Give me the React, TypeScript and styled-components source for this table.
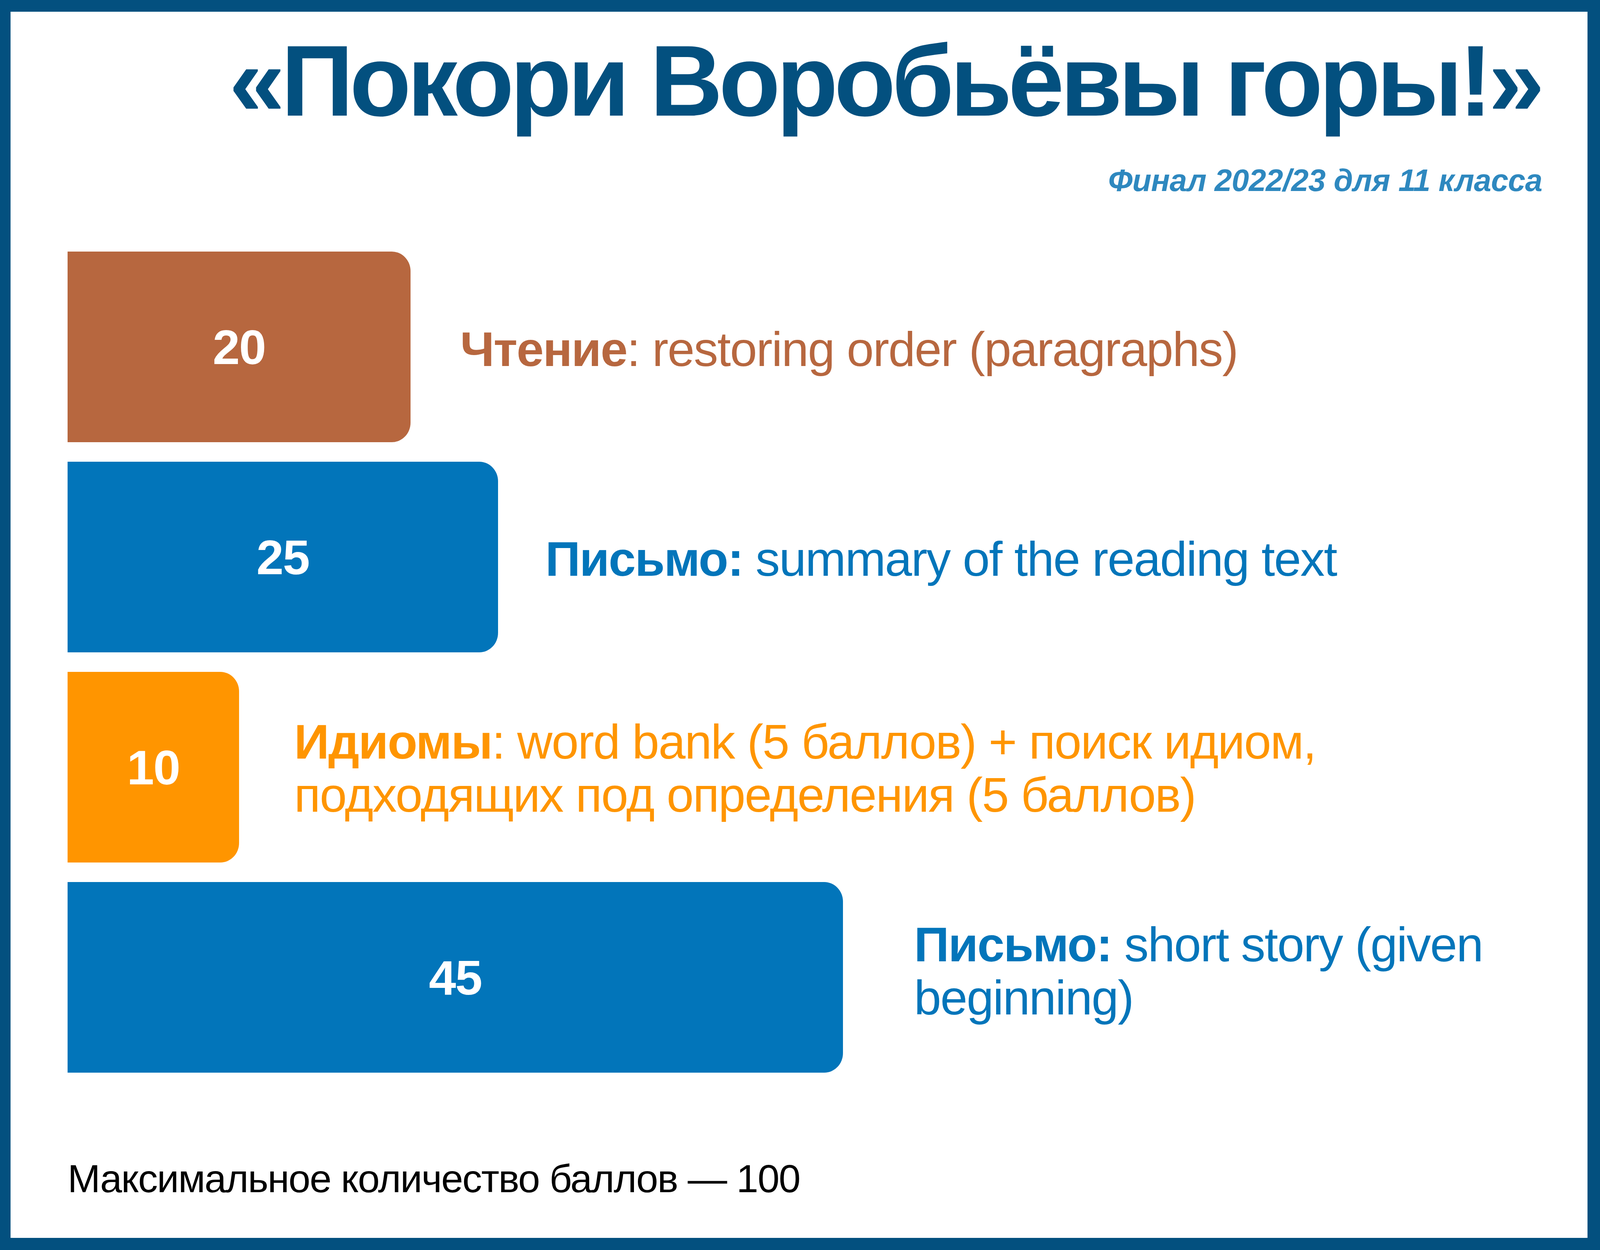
import React from 'react';
import styled, { createGlobalStyle } from 'styled-components';

type Segment = {
  value: number;
  width: number;
  color: string;
  offset: number;
  padTop: number;
  padBottom: number;
  title: string;
  boldColon: boolean;
  lines: string[];
};

const segments: Segment[] = [
  {
    value: 20,
    width: 878,
    color: '#b7673f',
    offset: 127,
    padTop: 12,
    padBottom: 0,
    title: 'Чтение',
    boldColon: false,
    lines: ['restoring order (paragraphs)'],
  },
  {
    value: 25,
    width: 1102,
    color: '#0275ba',
    offset: 121,
    padTop: 10,
    padBottom: 0,
    title: 'Письмо',
    boldColon: true,
    lines: ['summary of the reading text'],
  },
  {
    value: 10,
    width: 439,
    color: '#ff9500',
    offset: 141,
    padTop: 6,
    padBottom: 0,
    title: 'Идиомы',
    boldColon: false,
    lines: ['word bank (5 баллов) + поиск идиом,', 'подходящих под определения (5 баллов)'],
  },
  {
    value: 45,
    width: 1985,
    color: '#0275ba',
    offset: 182,
    padTop: 0,
    padBottom: 32,
    title: 'Письмо',
    boldColon: true,
    lines: ['short story (given', 'beginning)'],
  },
];

const GlobalStyle = createGlobalStyle`
  html, body {
    margin: 0;
    padding: 0;
    background: #ffffff;
  }
  body {
    font-family: "Liberation Sans", Arial, sans-serif;
  }
`;

const Slide = styled.div`
  box-sizing: border-box;
  width: 4096px;
  height: 3200px;
  overflow: hidden;
  border-style: solid;
  border-color: #03507f;
  border-width: 30px 32px 31px 27px;
  background: #ffffff;
  display: flex;
  flex-direction: column;
  font-family: "Liberation Sans", Arial, sans-serif;
`;

const Header = styled.header`
  display: flex;
  flex-direction: column;
  align-items: flex-end;
  padding: 48px 120px 0 0;
`;

const Title = styled.h1`
  margin: 0;
  font-size: 258px;
  line-height: 1;
  font-weight: 700;
  letter-spacing: -10px;
  color: #03507f;
  white-space: nowrap;
`;

const Subtitle = styled.div`
  margin-top: 86px;
  margin-right: -4px;
  font-size: 80px;
  line-height: 1;
  font-weight: 700;
  font-style: italic;
  letter-spacing: -0.8px;
  color: #2e88bf;
  white-space: nowrap;
`;

const Chart = styled.div`
  display: flex;
  flex-direction: column;
  gap: 50px;
  margin: 142px 0 0 146px;
`;

const Row = styled.div`
  display: flex;
  align-items: center;
`;

const Bar = styled.div<{ $color: string }>`
  flex: none;
  height: 488px;
  background: ${({ $color }) => $color};
  border-radius: 0 48px 48px 0 / 0 50px 50px 0;
  display: flex;
  align-items: center;
  justify-content: center;
  color: #ffffff;
  font-size: 125px;
  font-weight: 700;
  letter-spacing: -2px;
`;

const Label = styled.div<{ $color: string; $offset: number; $padTop: number; $padBottom: number }>`
  margin-left: ${({ $offset }) => $offset}px;
  padding: ${({ $padTop, $padBottom }) => `${$padTop}px 0 ${$padBottom}px`};
  color: ${({ $color }) => $color};
  font-size: 125px;
  line-height: 136px;
  letter-spacing: -2.3px;
  white-space: nowrap;
`;

const Strong = styled.span`
  font-weight: 700;
`;

const Footer = styled.div`
  margin: 221px 0 0 146px;
  font-size: 101px;
  line-height: 1;
  letter-spacing: -2.1px;
  color: #000000;
`;

export default function App() {
  return (
    <>
      <GlobalStyle />
      <Slide>
        <Header>
          <Title>«Покори Воробьёвы горы!»</Title>
          <Subtitle>Финал 2022/23 для 11 класса</Subtitle>
        </Header>
        <Chart>
          {segments.map((s, i) => (
            <Row key={i}>
              <Bar $color={s.color} style={{ width: s.width }}>
                {s.value}
              </Bar>
              <Label $color={s.color} $offset={s.offset} $padTop={s.padTop} $padBottom={s.padBottom}>
                <Strong>{s.boldColon ? `${s.title}:` : s.title}</Strong>
                {s.boldColon ? ' ' : ': '}
                {s.lines.map((line, j) => (
                  <React.Fragment key={j}>
                    {j > 0 && <br />}
                    {line}
                  </React.Fragment>
                ))}
              </Label>
            </Row>
          ))}
        </Chart>
        <Footer>Максимальное количество баллов — 100</Footer>
      </Slide>
    </>
  );
}
